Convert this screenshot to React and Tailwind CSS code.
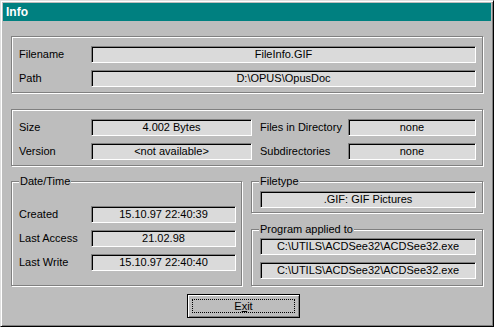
import React from 'react';

const font = { fontFamily: '"Liberation Sans", Arial, sans-serif' };

function Field({ value, w }) {
  return (
    <div
      className={`${w} h-[17px] flex items-center justify-center bg-[#dadada] border border-t-[#808080] border-l-[#808080] border-r-white border-b-white shadow-[inset_1px_1px_0_#000] text-[11px] leading-none text-black whitespace-nowrap overflow-hidden`}
    >
      {value}
    </div>
  );
}

function Group({ title, className, children }) {
  return (
    <div
      className={`relative border border-[#808080] shadow-[inset_1px_1px_0_#fff,1px_1px_0_#fff] ${className}`}
    >
      {title && (
        <span className="absolute left-[7px] top-[-8px] px-[1px] bg-[#bdbdbd] text-[11px] leading-[14px] text-black">
          {title}
        </span>
      )}
      {children}
    </div>
  );
}

function Row({ label, value, labelW = 'w-[72px]', fieldW }) {
  return (
    <div className="flex items-center h-[17px]">
      <span className={`${labelW} text-[11px] leading-none text-black`}>{label}</span>
      <Field value={value} w={fieldW} />
    </div>
  );
}

export default function App() {
  return (
    <div
      style={font}
      className="w-[494px] h-[327px] bg-[#bdbdbd] border border-t-[#dfdfdf] border-l-[#dfdfdf] border-r-black border-b-black shadow-[inset_1px_1px_0_#fff,inset_-1px_-1px_0_#808080] p-[2px] overflow-hidden"
    >
      {/* Title bar */}
      <div className="h-[18px] bg-[#008080] flex items-center pl-[3px]">
        <span className="text-white font-bold text-[12px] leading-none">Info</span>
      </div>

      <div className="pl-[8px]">
        {/* File */}
        <Group className="mt-[15px] w-[472px] h-[57px] pl-[7px] pt-[9px] flex flex-col gap-[7px]">
          <Row label="Filename" value="FileInfo.GIF" fieldW="w-[385px]" />
          <Row label="Path" value="D:\OPUS\OpusDoc" fieldW="w-[385px]" />
        </Group>

        {/* Size etc */}
        <Group className="mt-[16px] w-[472px] h-[57px] pl-[7px] pt-[9px] flex flex-col gap-[7px]">
          <div className="flex items-center">
            <Row label="Size" value="4.002 Bytes" fieldW="w-[161px]" />
            <div className="ml-[8px]">
              <Row label="Files in Directory" value="none" labelW="w-[88px]" fieldW="w-[128px]" />
            </div>
          </div>
          <div className="flex items-center">
            <Row label="Version" value="<not available>" fieldW="w-[161px]" />
            <div className="ml-[8px]">
              <Row label="Subdirectories" value="none" labelW="w-[88px]" fieldW="w-[128px]" />
            </div>
          </div>
        </Group>

        <div className="flex mt-[15px]">
          {/* Date/Time */}
          <Group
            title="Date/Time"
            className="w-[231px] h-[105px] pl-[7px] pt-[24px] flex flex-col gap-[7px]"
          >
            <Row label="Created" value="15.10.97 22:40:39" fieldW="w-[145px]" />
            <Row label="Last Access" value="21.02.98" fieldW="w-[145px]" />
            <Row label="Last Write" value="15.10.97 22:40:40" fieldW="w-[145px]" />
          </Group>

          <div className="ml-[9px] flex flex-col">
            <Group title="Filetype" className="w-[232px] h-[32px] pl-[8px] pt-[9px]">
              <Field value=".GIF: GIF Pictures" w="w-[216px]" />
            </Group>
            <Group
              title="Program applied to"
              className="mt-[16px] w-[232px] h-[57px] pl-[8px] pt-[8px] flex flex-col gap-[7px]"
            >
              <Field value="C:\UTILS\ACDSee32\ACDSee32.exe" w="w-[216px]" />
              <Field value="C:\UTILS\ACDSee32\ACDSee32.exe" w="w-[216px]" />
            </Group>
          </div>
        </div>
      </div>

      {/* Exit button */}
      <div className="mt-[8px] ml-[184px]">
        <button
          style={font}
          className="relative w-[113px] h-[24px] border border-black bg-[#bdbdbd] shadow-[inset_1px_1px_0_#fff,inset_-1px_-1px_0_#808080] text-[11px] leading-none text-black flex items-center justify-center"
        >
          <span className="absolute inset-[4px] border border-dotted border-black"></span>
          <span>
            E<span className="underline">x</span>it
          </span>
        </button>
      </div>
    </div>
  );
}
